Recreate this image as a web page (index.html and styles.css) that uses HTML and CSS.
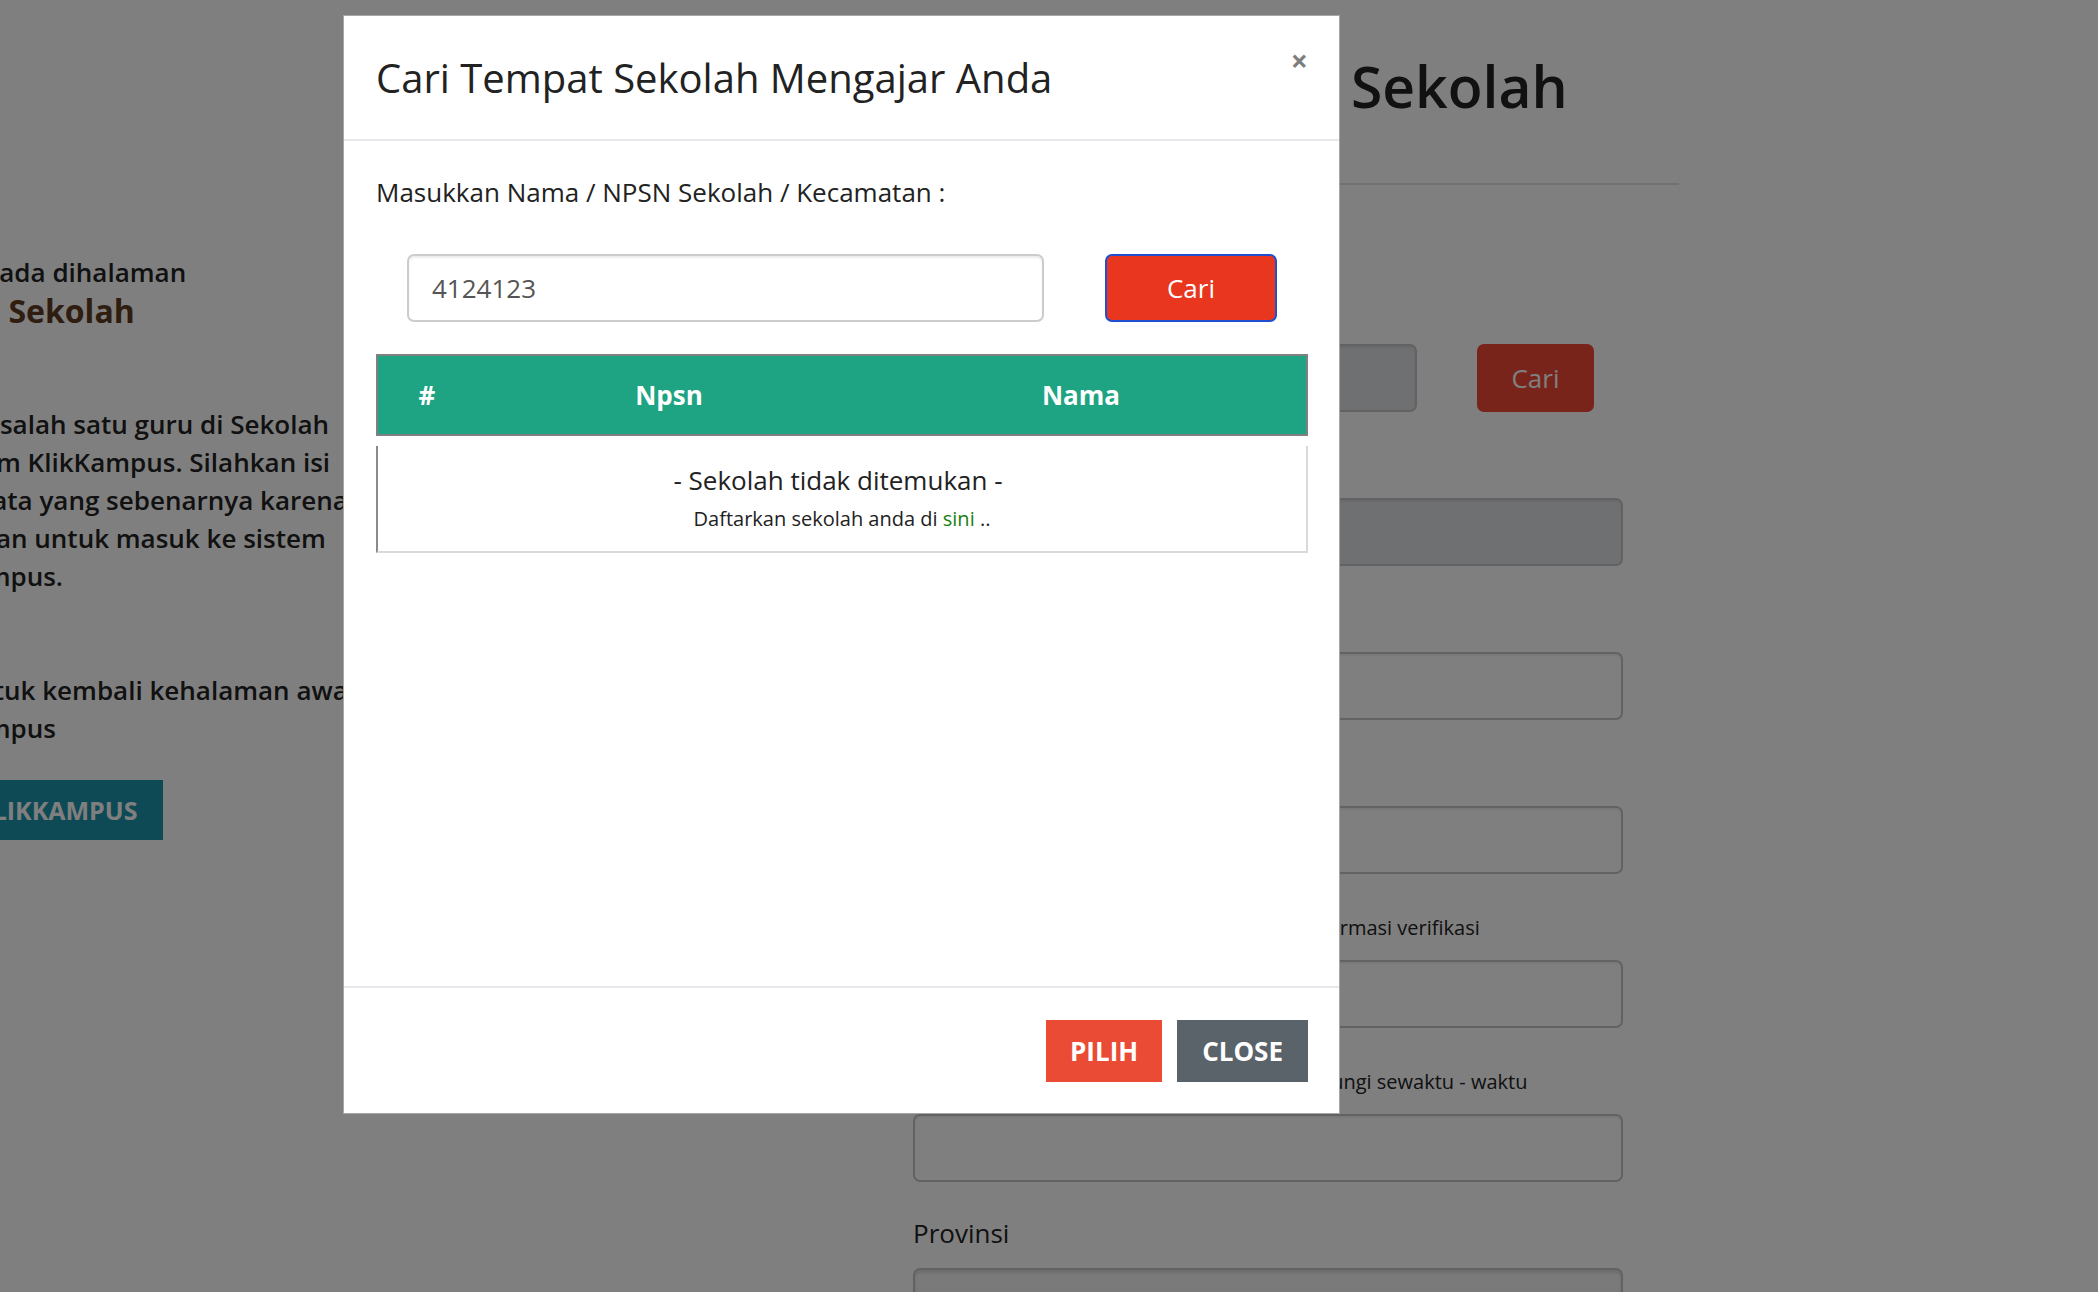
FILE: index.html
```html
<!DOCTYPE html>
<html lang="id">
<head>
<meta charset="utf-8">
<title>Pendaftaran Sekolah</title>
<link rel="stylesheet" href="styles.css">
</head>
<body>
<div class="page">
  <aside class="side">
    <div class="intro">
      <div class="intro-line">Saat ini anda berada dihalaman</div>
      <div class="intro-title">Pendaftaran Sekolah</div>
    </div>
    <p class="para">adalah salah satu guru di Sekolah<br>di sistem KlikKampus. Silahkan isi<br>form data yang sebenarnya karena<br>diberikan untuk masuk ke sistem<br>KlikKampus.</p>
    <p class="para para-back">Klik untuk kembali kehalaman awal<br>KlikKampus</p>
    <a class="back-btn">KE KLIKKAMPUS</a>
  </aside>

  <main class="form-col">
    <h1 class="form-title">Pendaftaran Sekolah</h1>
    <hr class="form-rule">

    <div class="group group-first">
      <label class="lbl">Sekolah</label>
      <div class="search-row">
        <input class="field field-ro search-field" readonly>
        <button class="btn-search">Cari</button>
      </div>
    </div>

    <div class="group">
      <label class="lbl">NPSN</label>
      <input class="field field-ro" readonly>
    </div>

    <div class="group">
      <label class="lbl">Nama Lengkap</label>
      <input class="field">
    </div>

    <div class="group">
      <label class="lbl">NUPTK</label>
      <input class="field">
    </div>

    <div class="group">
      <label class="lbl">Email <small class="hint">Pakai email aktif untuk menerima informasi verifikasi</small></label>
      <input class="field">
    </div>

    <div class="group">
      <label class="lbl">No. Telp <small class="hint">Nomor HP aktif yang dapat dihubungi sewaktu - waktu</small></label>
      <input class="field">
    </div>

    <div class="group">
      <label class="lbl">Provinsi</label>
      <div class="field select"><span class="caret"></span></div>
    </div>
  </main>
</div>

<div class="backdrop"></div>

<div class="modal">
  <div class="modal-header">
    <h4 class="modal-title">Cari Tempat Sekolah Mengajar Anda</h4>
    <button class="close">&times;</button>
  </div>
  <div class="modal-body">
    <p class="search-label">Masukkan Nama / NPSN Sekolah / Kecamatan :</p>
    <div class="modal-search">
      <input class="modal-input" value="4124123">
      <button class="modal-cari">Cari</button>
    </div>
    <div class="result">
      <div class="result-head">
        <span>#</span>
        <span>Npsn</span>
        <span>Nama</span>
      </div>
      <div class="result-empty">
        <div class="empty-title">- Sekolah tidak ditemukan -</div>
        <div class="empty-note">Daftarkan sekolah anda di <a class="empty-link">sini</a> ..</div>
      </div>
    </div>
  </div>
  <div class="modal-footer">
    <button class="btn-pilih">PILIH</button>
    <button class="btn-close">CLOSE</button>
  </div>
</div>
</body>
</html>
```

FILE: styles.css
```css
html, body {
  margin: 0;
  width: 2098px;
  height: 1292px;
  overflow: hidden;
  background: #ffffff;
  font-family: "Open Sans", "Liberation Sans", sans-serif;
  color: #222222;
}

.page {
  display: flex;
  align-items: flex-start;
}

/* ---------- left info column ---------- */
.side {
  flex: none;
  width: 999px;
  margin-left: -86px;
  font-size: 26px;
  font-weight: 600;
  color: #222222;
}

.intro {
  margin-left: -126px;
  padding-top: 253px;
  white-space: nowrap;
}

.intro-line {
  line-height: 38px;
}

.intro-title {
  padding-left: 12px;
  font-size: 32px;
  font-weight: 700;
  line-height: 40px;
  color: #5e3a1e;
}

.para {
  margin: 74px 0 0 -6px;
  line-height: 38px;
  white-space: nowrap;
}

.para-back {
  margin-top: 76px;
}

.back-btn {
  display: inline-block;
  margin-top: 33px;
  height: 60px;
  line-height: 60px;
  padding: 0 25px;
  background: #1c94aa;
  color: #ffffff;
  font-size: 25px;
  font-weight: 700;
}

/* ---------- right form column ---------- */
.form-col {
  flex: none;
  width: 710px;
}

.form-title {
  margin: 0;
  padding: 50px 0 0 25px;
  font-size: 57px;
  line-height: 72px;
  font-weight: 600;
  text-align: center;
  color: #222222;
}

.form-rule {
  margin: 61px -56px 0;
  border: 0;
  height: 2px;
  background: #e9e1da;
}

.group {
  margin-top: 32px;
}

.group-first {
  margin-top: 105px;
}

.lbl {
  display: block;
  height: 38px;
  font-size: 26px;
  line-height: 38px;
  margin-bottom: 16px;
  white-space: nowrap;
}

.hint {
  font-size: 20px;
  line-height: 20px;
}

.field {
  display: block;
  box-sizing: border-box;
  width: 100%;
  height: 68px;
  margin: 0;
  border: 2px solid #c4c4c4;
  border-radius: 7px;
  background: #ffffff;
  box-shadow: inset 0 2px 2px rgba(0, 0, 0, 0.06);
}

.field-ro {
  background: #dfe0e4;
}

.search-row {
  display: flex;
  gap: 60px;
}

.search-field {
  width: 504px;
}

.btn-search {
  flex: none;
  width: 117px;
  height: 68px;
  border: 0;
  border-radius: 7px;
  background: #f04834;
  color: #ffffff;
  font-family: inherit;
  font-size: 26px;
}

.select {
  position: relative;
  background: linear-gradient(#f6f6f6, #ededed);
  box-shadow: inset 0 3px 3px rgba(0, 0, 0, 0.12);
}

.caret {
  position: absolute;
  right: 18px;
  top: 26px;
  width: 0;
  height: 0;
  border-left: 5px solid transparent;
  border-right: 5px solid transparent;
  border-top: 6px solid #444444;
}

/* ---------- modal ---------- */
.backdrop {
  position: fixed;
  inset: 0;
  background: rgba(0, 0, 0, 0.5);
}

.modal {
  position: absolute;
  left: 343px;
  top: 15px;
  width: 997px;
  height: 1099px;
  box-sizing: border-box;
  display: flex;
  flex-direction: column;
  background: #ffffff;
  border: 1px solid rgba(0, 0, 0, 0.35);
}

.modal-header {
  flex: none;
  height: 125px;
  box-sizing: border-box;
  display: flex;
  justify-content: space-between;
  align-items: center;
  padding: 0 31px 0 32px;
  border-bottom: 2px solid #e6e8eb;
}

.modal-title {
  margin: 0;
  font-size: 40px;
  line-height: 48px;
  font-weight: 400;
  color: #222222;
}

.close {
  align-self: flex-start;
  margin-top: 30px;
  padding: 0;
  border: 0;
  background: none;
  font-family: inherit;
  font-size: 30px;
  line-height: 30px;
  font-weight: 700;
  color: #000000;
  opacity: 0.5;
}

.modal-body {
  flex: 1;
  padding: 32px 31px 0 32px;
}

.search-label {
  margin: 0;
  font-size: 26px;
  line-height: 38px;
}

.modal-search {
  display: flex;
  gap: 61px;
  margin-top: 43px;
  padding: 0 30px 0 31px;
}

.modal-input {
  flex: none;
  width: 637px;
  height: 68px;
  box-sizing: border-box;
  margin: 0;
  padding: 0 0 0 23px;
  border: 2px solid #cccccc;
  border-radius: 7px;
  box-shadow: inset 0 2px 2px rgba(0, 0, 0, 0.08);
  font-family: inherit;
  font-size: 26px;
  color: #555555;
}

.modal-cari {
  flex: none;
  width: 172px;
  height: 68px;
  box-sizing: border-box;
  border: 2px solid #1f4fcf;
  border-radius: 7px;
  background: #e8361f;
  color: #ffffff;
  font-family: inherit;
  font-size: 26px;
}

.result {
  margin-top: 32px;
}

.result-head {
  display: grid;
  grid-template-columns: 98px 386px 1fr;
  align-items: center;
  height: 82px;
  box-sizing: border-box;
  padding-right: 6px;
  border: 2px solid #808080;
  background: #1ea383;
  color: #ffffff;
  font-size: 26px;
  font-weight: 700;
  text-align: center;
}

.result-empty {
  margin-top: 10px;
  height: 107px;
  box-sizing: border-box;
  padding-top: 15px;
  border-left: 2px solid #8a8a8a;
  border-right: 2px solid #dadada;
  border-bottom: 2px solid #dadada;
  text-align: center;
}

.empty-title {
  padding-right: 8px;
  font-size: 26px;
  line-height: 38px;
}

.empty-note {
  margin-top: 5px;
  font-size: 20px;
  line-height: 30px;
}

.empty-link {
  color: #1a7f10;
}

.modal-footer {
  flex: none;
  height: 127px;
  box-sizing: border-box;
  display: flex;
  justify-content: flex-end;
  align-items: center;
  gap: 15px;
  padding-right: 31px;
  border-top: 2px solid #e6e8eb;
}

.btn-pilih,
.btn-close {
  height: 62px;
  padding: 0 25px;
  border: 0;
  border-radius: 0;
  color: #ffffff;
  font-family: inherit;
  font-size: 26px;
  font-weight: 700;
}

.btn-pilih {
  padding: 0 24px;
  background: #e94b35;
}

.btn-close {
  background: #5a626a;
}
```
